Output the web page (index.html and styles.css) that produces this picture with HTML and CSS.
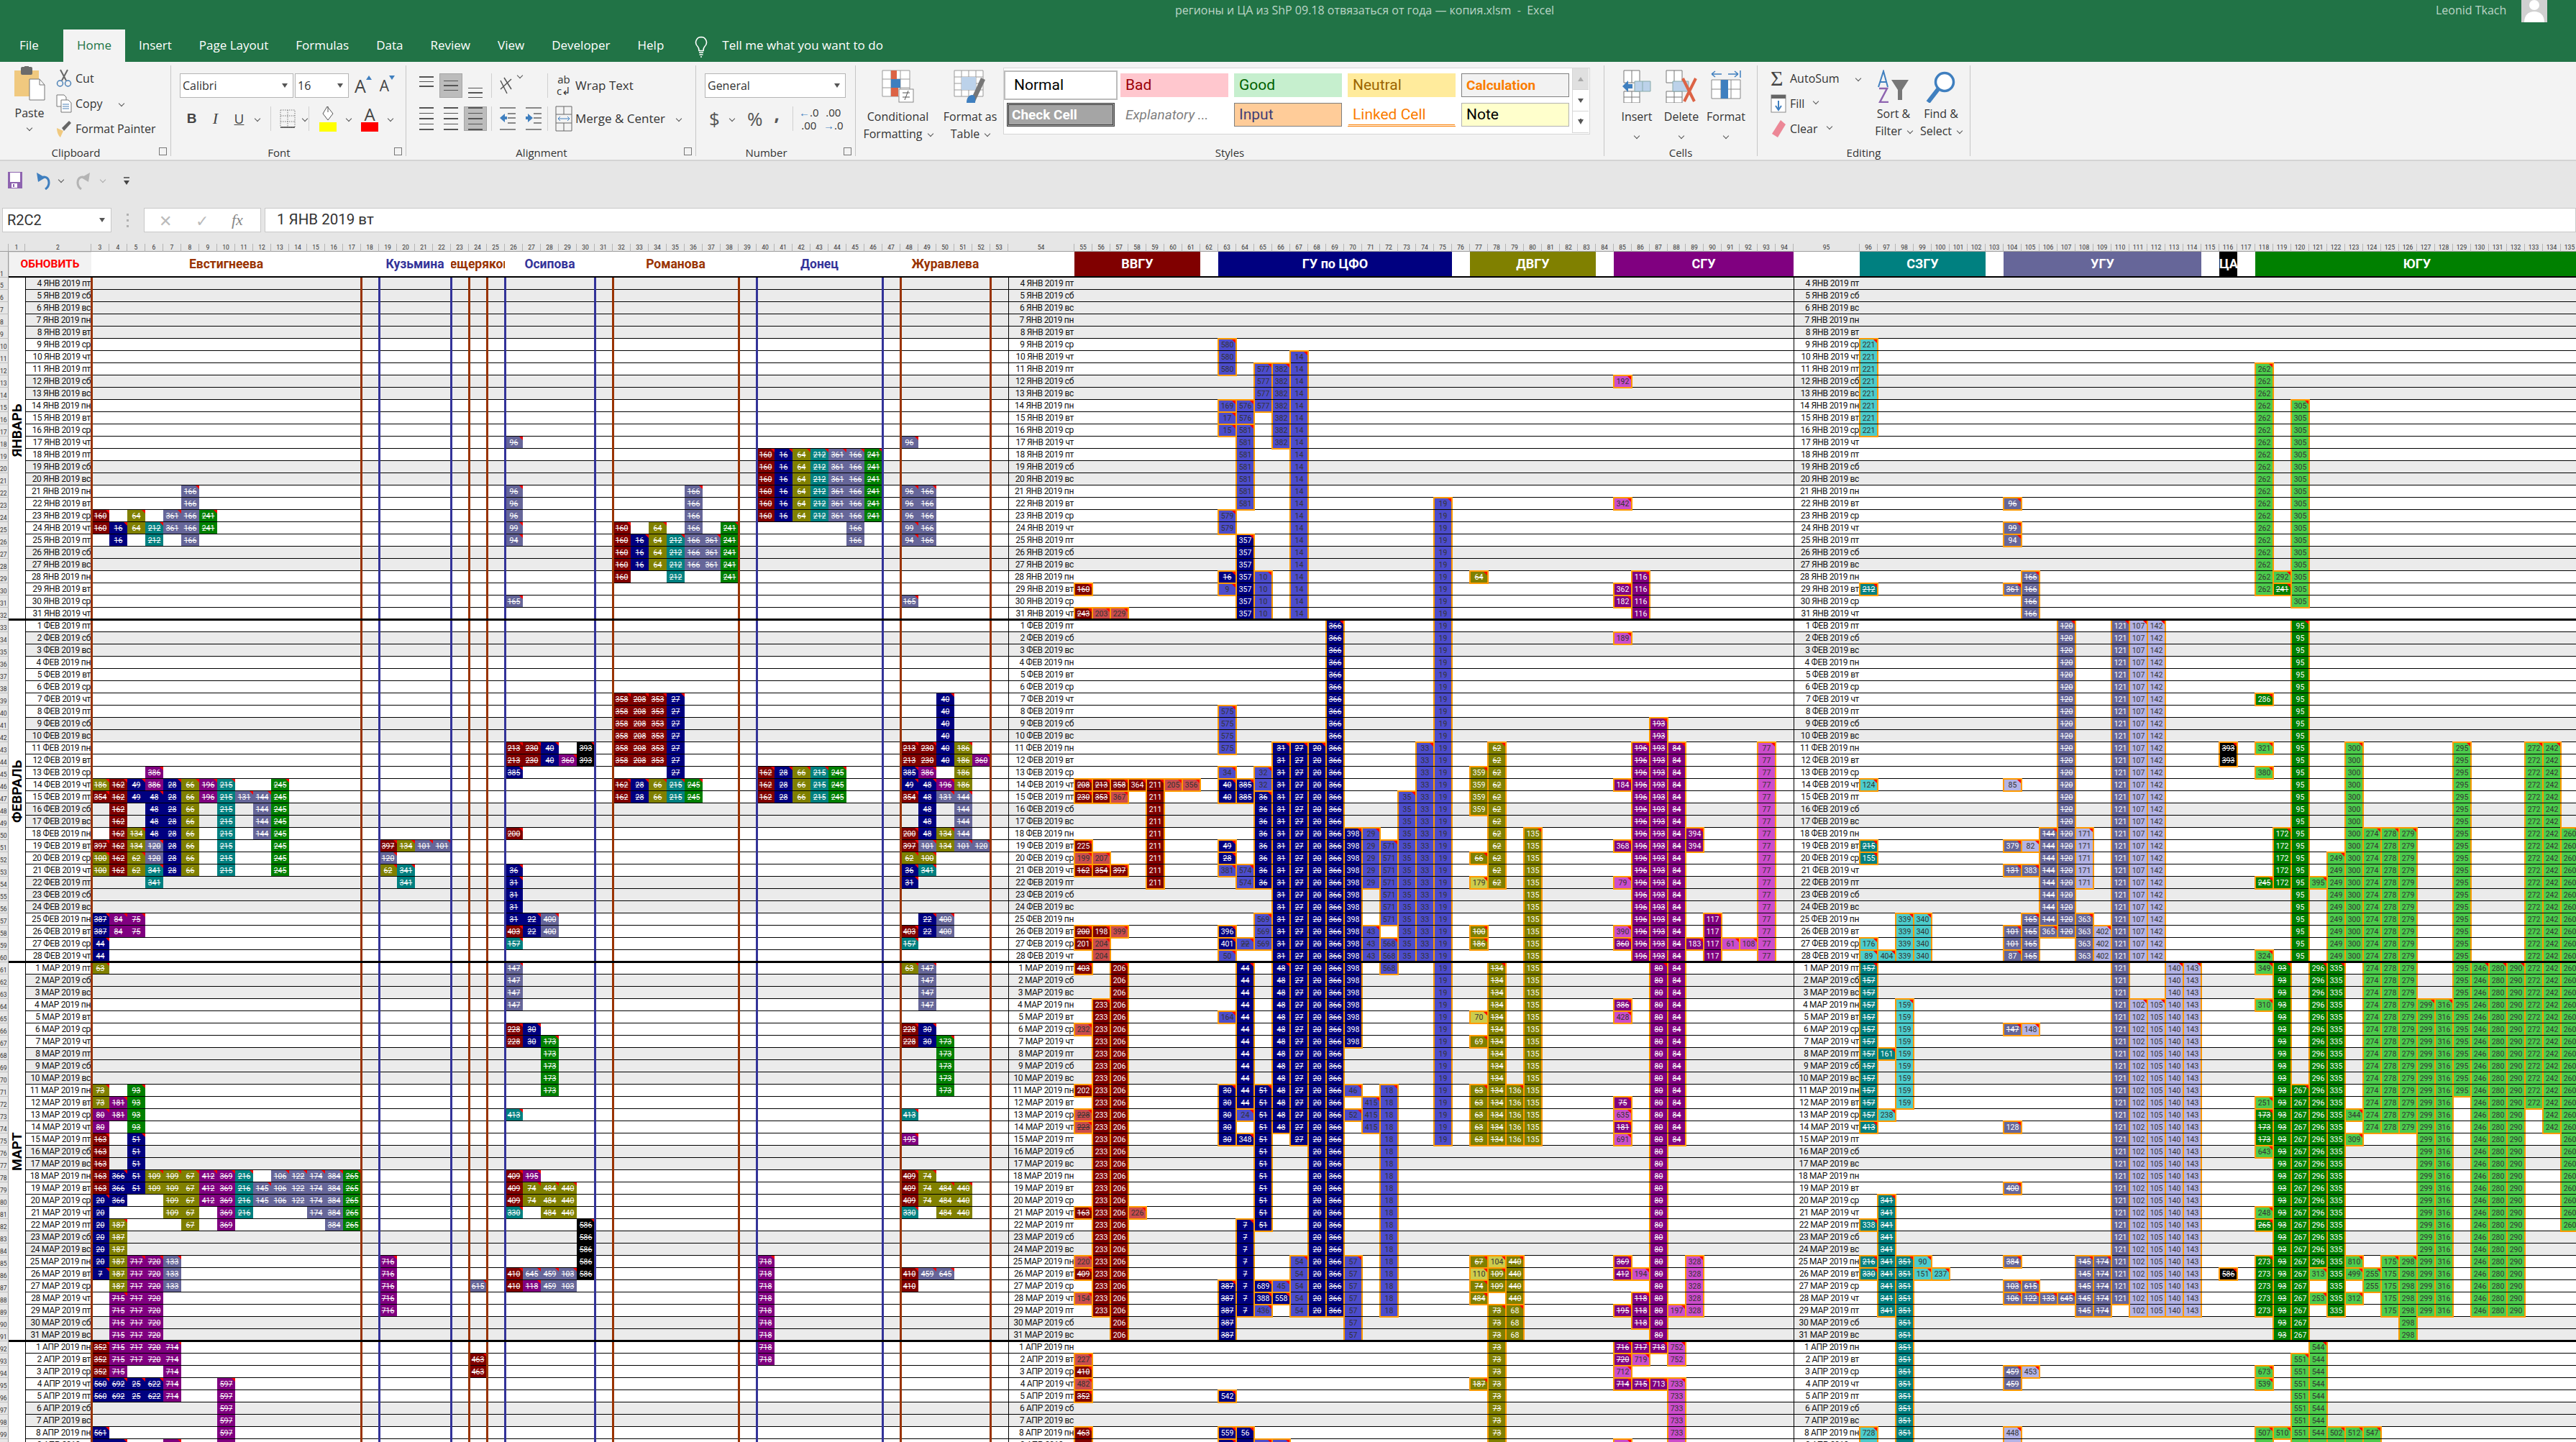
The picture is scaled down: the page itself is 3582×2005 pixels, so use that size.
FILE: index.html
```html
<!DOCTYPE html>
<html lang="ru">
<head>
    <meta charset="UTF-8">
    <title>регионы и ЦА из ShP 09.18</title>
    <link rel="stylesheet" href="styles.css">
</head>
<body>
<div class="titlebar">
    <div class="title-row">
        <span class="doc-title">регионы и ЦА из ShP 09.18 отвязаться от года — копия.xlsm &nbsp;-&nbsp; Excel</span>
        <span class="user">Leonid Tkach</span>
        <svg class="avatar" viewBox="0 0 36 31"><rect width="36" height="31" fill="#d0d0d0"/><circle cx="18" cy="7" r="7" fill="#fff"/><path d="M4 31c0-10 6-15 14-15s14 5 14 15z" fill="#fff"/></svg>
    </div>
    <div class="tabs">
        <span class="tab tab-file">File</span>
        <span class="tab tab-on">Home</span>
        <span class="tab">Insert</span>
        <span class="tab">Page Layout</span>
        <span class="tab">Formulas</span>
        <span class="tab">Data</span>
        <span class="tab">Review</span>
        <span class="tab">View</span>
        <span class="tab">Developer</span>
        <span class="tab">Help</span>
        <svg class="bulb" viewBox="0 0 18 30"><path d="M9 1.5a7.5 7.5 0 0 0-5 13c1.5 1.5 2 3 2 6h6c0-3 .5-4.500 2-6a7.500 7.500 0 0 0-5-13z" fill="none" stroke="#fff" stroke-width="1.600"/><path d="M6 23h6M6.500 26h5M8 29h2" stroke="#fff" stroke-width="1.600"/></svg>
        <span class="tell">Tell me what you want to do</span>
    </div>
</div>

<div class="ribbon">
    <div class="group g-clip">
        <div class="body">
            <div class="paste">
                <svg width="44" height="48" viewBox="0 0 44 48"><rect x="1" y="6" width="34" height="36" fill="#f0c97f"/><rect x="10" y="1" width="16" height="11" rx="2" fill="#6b6b6b"/><rect x="15" y="0" width="6" height="5" fill="#6b6b6b"/><path d="M22 18h14l7 8v21H22z" fill="#fff" stroke="#777"/><path d="M36 18v8h7" fill="none" stroke="#777"/></svg>
                <span class="paste-label">Paste</span>
                <i class="chev"></i>
            </div>
            <div class="clip-items">
                <div class="clip-row">
                    <svg width="22" height="26" viewBox="0 0 22 26"><path d="M6 1l8 15M16 1L8 16" stroke="#666" stroke-width="2"/><circle cx="5.500" cy="20" r="4" fill="none" stroke="#4a7fb5" stroke-width="1.500"/><circle cx="16.500" cy="20" r="4" fill="none" stroke="#4a7fb5" stroke-width="1.500"/></svg>
                    <span>Cut</span>
                </div>
                <div class="clip-row">
                    <svg width="22" height="26" viewBox="0 0 22 26"><path d="M1 1h10l3 3v13H1z" fill="#fff" stroke="#777"/><path d="M7 8h10l4 4v13H7z" fill="#fff" stroke="#777"/><path d="M9 14h9M9 17h9M9 20h9" stroke="#4a7fb5"/></svg>
                    <span>Copy</span><i class="chev chev-gap"></i>
                </div>
                <div class="clip-row">
                    <svg width="22" height="26" viewBox="0 0 22 26"><path d="M1 12l9 4-4 9c-3-2-5-8-5-13z" fill="#f0c97f"/><path d="M8 12l10-10 3 3-10 11z" fill="#666"/></svg>
                    <span>Format Painter</span>
                </div>
            </div>
        </div>
        <div class="label label-l">Clipboard<i class="launcher"></i></div>
    </div>

    <div class="group g-font">
        <div class="body col">
            <div class="line">
                <div class="combo combo-font">Calibri<i class="tri"></i></div>
                <div class="combo combo-size">16<i class="tri"></i></div>
                <span class="grow-a">A<i class="tri-b up"></i></span>
                <span class="shrink-a">A<i class="tri-b"></i></span>
            </div>
            <div class="line line2">
                <b class="fmt b-b">B</b><i class="fmt b-i">I</i><u class="fmt b-u">U</u><i class="chev chev-u"></i>
                <span class="vsep"></span>
                <svg class="ico-border" width="22" height="26" viewBox="0 0 22 26"><path d="M1 1h20v24H1zM11 1v24M1 9h20M1 17h20" fill="none" stroke="#777" stroke-dasharray="1.500 1.500"/><path d="M1 25h20" stroke="#444" stroke-width="1.500"/></svg>
                <i class="chev"></i>
                <span class="vsep vsep-fill"></span>
                <span class="fill-ico"><svg width="22" height="22" viewBox="0 0 22 22"><path d="M10 1l8 10-7 9-7-9z" fill="#fff" stroke="#555"/><path d="M11 1v8" stroke="#555"/></svg><em class="fill-bar yellow"></em></span>
                <i class="chev"></i>
                <span class="color-ico">A<em class="fill-bar red"></em></span>
                <i class="chev"></i>
            </div>
        </div>
        <div class="label label-l">Font<i class="launcher"></i></div>
    </div>

    <div class="group g-align">
        <div class="body col">
            <div class="line">
                <span class="al al-top"><em></em><em></em><em></em></span>
                <span class="al al-mid al-on"><em></em><em></em><em></em></span>
                <span class="al al-bot"><em></em><em></em><em></em></span>
                <span class="vsep vsep-tall"></span>
                <svg class="orient" width="22" height="34" viewBox="0 0 22 34"><path d="M3 10l9 18M8 6l10 16M3 22l15-14" stroke="#555" fill="none" stroke-width="1.500"/></svg>
                <i class="chev"></i>
                <span class="vsep vsep-tall vs-wrap"></span>
                <span class="abc">ab<br>c↲</span>
                <span class="rtext">Wrap Text</span>
            </div>
            <div class="line line2">
                <span class="al al-full"><em></em><em></em><em></em><em></em><em></em></span>
                <span class="al al-full"><em></em><em></em><em></em><em></em><em></em></span>
                <span class="al al-full al-on al-big"><em></em><em></em><em></em><em></em><em></em></span>
                <span class="vsep vsep-tall"></span>
                <svg class="indent" width="24" height="34" viewBox="0 0 24 34"><path d="M1 2h22M12 10h11M12 16h11M12 23h11M1 32h22" stroke="#666" stroke-width="1.500"/><path d="M1 16l7-6v4h3v4H8v4z" fill="#3f7fbf"/></svg>
                <svg class="indent" width="24" height="34" viewBox="0 0 24 34"><path d="M1 2h22M12 10h11M12 16h11M12 23h11M1 32h22" stroke="#666" stroke-width="1.500"/><path d="M11 16l-7-6v4H1v4h3v4z" fill="#3f7fbf"/></svg>
                <span class="vsep vsep-tall vs-merge"></span>
                <svg class="merge" width="24" height="36" viewBox="0 0 24 36"><path d="M1 1h22v34H1zM1 12h22M1 24h22M12 1v11M12 24v11" fill="none" stroke="#666"/><path d="M4 18h16M4 18l3-3M4 18l3 3M20 18l-3-3M20 18l-3 3" stroke="#3f7fbf" fill="none"/></svg>
                <span class="rtext">Merge &amp; Center</span><i class="chev chev-merge"></i>
            </div>
        </div>
        <div class="label label-l">Alignment<i class="launcher"></i></div>
    </div>

    <div class="group g-num">
        <div class="body col">
            <div class="line">
                <div class="combo combo-num">General<i class="tri"></i></div>
            </div>
            <div class="line line2">
                <span class="num-sym dollar">$</span><i class="chev"></i>
                <span class="num-sym pct">%</span>
                <span class="num-sym comma">,</span>
                <span class="vsep vsep-dec"></span>
                <span class="dec"><u>←</u>.0<br>.00</span>
                <span class="dec">.00<br><u>→</u>.0</span>
            </div>
        </div>
        <div class="label label-l">Number<i class="launcher"></i></div>
    </div>

    <div class="group g-styles">
        <div class="body">
            <div class="big big-cf">
                <svg width="46" height="46" viewBox="0 0 46 46"><path d="M1 1h38v36H1zM13 1v36M26 1v36M1 13h38M1 25h38" fill="#fff" stroke="#999"/><rect x="13" y="1" width="8" height="12" fill="#dc6345"/><rect x="13" y="13" width="13" height="12" fill="#3f7fbf"/><rect x="13" y="25" width="10" height="12" fill="#dc6345"/><rect x="24" y="27" width="20" height="18" fill="#fff" stroke="#888"/><path d="M29 32h10M29 38h10M37 29l-5 13" stroke="#555"/></svg>
                <span>Conditional</span><span>Formatting<i class="chev chev-in"></i></span>
            </div>
            <div class="big big-table">
                <svg width="46" height="46" viewBox="0 0 46 46"><path d="M1 1h40v36H1zM1 10h40M1 19h40M1 28h40M11 1v36M21 1v36M31 1v36" fill="#fff" stroke="#999"/><rect x="11" y="10" width="20" height="18" fill="#bcd2ea"/><path d="M30 44L44 14l-6-3-11 24z" fill="#777"/><path d="M18 46c0-7 3-11 8-11 3 0 5 3 4 11z" fill="#3f7fbf"/></svg>
                <span>Format as</span><span>Table<i class="chev chev-in"></i></span>
            </div>
            <div class="gallery">
                <div class="style st-normal">Normal</div>
                <div class="style st-bad">Bad</div>
                <div class="style st-good">Good</div>
                <div class="style st-neutral">Neutral</div>
                <div class="style st-calc">Calculation</div>
                <div class="style st-check">Check Cell</div>
                <div class="style st-expl">Explanatory ...</div>
                <div class="style st-input">Input</div>
                <div class="style st-linked">Linked Cell</div>
                <div class="style st-note">Note</div>
                <div class="gal-scroll">
                    <span class="gs gs-on"><i class="tri tri-up"></i></span>
                    <span class="gs"><i class="tri"></i></span>
                    <span class="gs"><i class="tri tri-more"></i></span>
                </div>
            </div>
        </div>
        <div class="label">Styles</div>
    </div>

    <div class="group g-cells">
        <div class="body">
            <div class="big big-cell">
                <svg width="42" height="46" viewBox="0 0 42 46"><path d="M3 1h22v17H3zM14 1v17M3 30h22v16H3zM14 30v16M3 38h22" fill="#fff" stroke="#777"/><path d="M18 16h22v14H18zM29 16v14" fill="#bcd2ea" stroke="#8aa"/><path d="M1 23l8-8v5h6v6H9v5z" fill="#3f7fbf"/></svg>
                <span>Insert</span><i class="chev"></i>
            </div>
            <div class="big big-cell">
                <svg width="44" height="46" viewBox="0 0 44 46"><path d="M1 1h22v17H1zM12 1v17M1 30h22v16H1zM12 30v16M1 38h22" fill="#fff" stroke="#777"/><path d="M10 16h22v14H10z" fill="#bcd2ea" stroke="#8aa"/><path d="M24 12l16 32M42 12L26 44" stroke="#dc6345" stroke-width="4"/></svg>
                <span>Delete</span><i class="chev"></i>
            </div>
            <div class="big big-cell">
                <svg width="42" height="46" viewBox="0 0 42 46"><path d="M1 14h40v26H1zM14 14v26M28 14v26M1 27h40" fill="#fff" stroke="#888"/><rect x="14" y="14" width="10" height="26" fill="#3f7fbf"/><path d="M1 6h14M1 6l5-4M1 6l5 4M24 6h14M38 6l-5-4M38 6l-5 4M41 1v10" stroke="#3f7fbf" fill="none" stroke-width="1.500"/></svg>
                <span>Format</span><i class="chev"></i>
            </div>
        </div>
        <div class="label">Cells</div>
    </div>

    <div class="group g-edit">
        <div class="body">
            <div class="edit-items">
                <div class="clip-row"><span class="sigma">Σ</span><span>AutoSum</span><i class="chev chev-gap"></i></div>
                <div class="clip-row"><svg width="22" height="26" viewBox="0 0 22 26"><rect x="1" y="1" width="20" height="24" fill="#fff" stroke="#888"/><rect x="1" y="1" width="20" height="5" fill="#666"/><path d="M11 9v12M7 16l4 6 4-6" stroke="#3f7fbf" stroke-width="2" fill="none"/></svg><span>Fill</span><i class="chev chev-in"></i></div>
                <div class="clip-row"><svg width="22" height="26" viewBox="0 0 22 26"><path d="M14 1l7 6-11 18-8-5z" fill="#ec8796"/></svg><span>Clear</span><i class="chev chev-in"></i></div>
            </div>
            <div class="big big-sort">
                <svg width="46" height="46" viewBox="0 0 46 46"><path d="M2 24L9 2l6 22M5 17h8" fill="none" stroke="#3f7fbf" stroke-width="2"/><path d="M3 26h11L4 45h12" fill="none" stroke="#8e64b0" stroke-width="2.500"/><path d="M20 14h24l-9 14v14h-6V28z" fill="#777"/></svg>
                <span>Sort &amp;</span><span>Filter<i class="chev chev-in"></i></span>
            </div>
            <div class="big big-find">
                <svg width="46" height="46" viewBox="0 0 46 46"><circle cx="28" cy="17" r="12.500" fill="#fff" stroke="#3f7fbf" stroke-width="3.500"/><path d="M19 27L5 45" stroke="#3f7fbf" stroke-width="6"/></svg>
                <span>Find &amp;</span><span>Select<i class="chev chev-in"></i></span>
            </div>
        </div>
        <div class="label">Editing</div>
    </div>
</div>

<div class="qat">
    <svg width="22" height="24" viewBox="0 0 22 24"><path d="M1 1h20v23H1z" fill="#8e64b0"/><rect x="4" y="2" width="14" height="13" fill="#fff"/><rect x="6" y="17" width="8" height="6" fill="#fff"/><rect x="8" y="18" width="2" height="4" fill="#8e64b0"/></svg>
    <svg class="q-undo" width="24" height="26" viewBox="0 0 24 26"><path d="M6 11c8-6 14-2 14 5 0 4-2 7-5 9" fill="none" stroke="#3f7fbf" stroke-width="3"/><path d="M3 2l2 13 10-6z" fill="#3f7fbf"/></svg>
    <i class="chev"></i>
    <svg class="q-redo" width="24" height="26" viewBox="0 0 24 26"><path d="M18 11C10 5 4 9 4 16c0 4 2 7 5 9" fill="none" stroke="#b4b4b4" stroke-width="3"/><path d="M21 2l-2 13-10-6z" fill="#b4b4b4"/></svg>
    <i class="chev chev-dim"></i>
    <svg class="q-more" width="10" height="14" viewBox="0 0 10 14"><path d="M1 2h8" stroke="#444" stroke-width="1.500"/><path d="M1 6h8l-4 6z" fill="#444"/></svg>
</div>

<div class="formula-bar">
    <div class="namebox">R2C2<i class="tri"></i></div>
    <div class="fb-dots"><em></em><em></em><em></em></div>
    <div class="fb-btns"><span class="x">✕</span><span class="ok">✓</span><span class="fx">fx</span></div>
    <div class="fb-input">1 ЯНВ 2019 вт</div>
</div>

<div class="sheet" id="sheet"></div>

<script src="script.js"></script>
</body>
</html>
```

FILE: styles.css
```css
* {
    box-sizing: border-box;
}

html, body {
    margin: 0;
    width: 3582px;
    height: 2005px;
    overflow: hidden;
    background: #e6e6e6;
    font-family: "Open Sans", "Liberation Sans", sans-serif;
    color: #333;
}

/* title bar + tabs */
.titlebar {
    height: 86px;
    background: #217346;
    color: #fff;
    display: flex;
    flex-direction: column;
}

.title-row {
    height: 41px;
    display: flex;
    padding-left: 1634px;
    font-size: 16px;
    line-height: 29px;
    color: #bcd5c7;
}

.doc-title {
    width: 1753px;
    white-space: nowrap;
}

.user {
    width: 119px;
    white-space: nowrap;
}

.avatar {
    width: 36px;
    height: 31px;
}

.tabs {
    height: 45px;
    display: flex;
    align-items: stretch;
    padding-left: 8px;
    font-size: 17px;
    line-height: 44px;
}

.tab {
    padding: 0 19px;
}

.tab-file {
    padding-right: 34px;
}

.tab-on {
    background: #f3f3f3;
    color: #217346;
}

.bulb {
    width: 18px;
    height: 30px;
    margin: 9px 20px 0 24px;
}

/* ribbon */
.ribbon {
    height: 138px;
    background: #f3f3f3;
    border-bottom: 2px solid #d4d4d4;
    display: flex;
    padding-top: 5px;
    font-size: 16px;
}

.group {
    display: flex;
    flex-direction: column;
    height: 126px;
    border-right: 1.500px solid #c6c6c6;
    position: relative;
}

.g-clip { width: 238px; }
.g-font { width: 327px; }
.g-align { width: 403px; }
.g-num { width: 222px; }
.g-styles { width: 1041px; }
.g-cells { width: 213px; }
.g-edit { width: 296px; border-right-width: 1px; }

.body {
    height: 108px;
    flex: none;
    display: flex;
}

.body.col {
    flex-direction: column;
    padding-left: 12px;
}

.label {
    flex: none;
    height: 18px;
    text-align: center;
    font-size: 15px;
    line-height: 26px;
    white-space: nowrap;
}

.label-l {
    padding-right: 26px;
}

.launcher {
    position: absolute;
    right: 5px;
    bottom: 1px;
    width: 11px;
    height: 11px;
    border: 1px solid #777;
    border-top-width: 1px;
}

.chev {
    display: inline-block;
    width: 6px;
    height: 6px;
    border-right: 1px solid #555;
    border-bottom: 1px solid #555;
    transform: rotate(45deg);
    flex: none;
}

.chev-dim { border-color: #aaa; }
.chev-gap { margin-left: 18px; }
.chev-in { margin-left: 8px; position: relative; top: -3px; }

.tri {
    display: inline-block;
    width: 0;
    height: 0;
    border: 4px solid transparent;
    border-top: 6px solid #555;
    border-bottom: 0;
    flex: none;
}

.paste {
    width: 74px;
    margin-left: 4px;
    display: flex;
    flex-direction: column;
    align-items: center;
    padding-top: 1px;
}

.paste-label {
    margin-top: 6px;
    line-height: 22px;
}

.paste .chev {
    margin-top: 7px;
}

.clip-items {
    display: flex;
    flex-direction: column;
    padding-top: 0;
}

.clip-row {
    height: 35px;
    display: flex;
    align-items: center;
    gap: 5px;
    white-space: nowrap;
}

/* font group */
.line {
    height: 48px;
    flex: none;
    display: flex;
    align-items: flex-start;
    padding-top: 11px;
}

.line2 {
    height: 52px;
    align-items: center;
    padding-top: 0;
}

.combo {
    height: 34px;
    background: #fff;
    border: 1.500px solid #b5b5b5;
    display: flex;
    align-items: center;
    justify-content: space-between;
    padding: 0 7px 0 3px;
    font-size: 16px;
}

.combo-font { width: 158px; }
.combo-size { width: 75px; margin-left: 2px; }
.combo-num { width: 196px; }

.grow-a, .shrink-a {
    font-size: 25px;
    line-height: 34px;
    color: #444;
    margin-left: 8px;
    display: flex;
}

.shrink-a {
    font-size: 21px;
    margin-left: 11px;
}

.tri-b {
    display: block;
    width: 0;
    height: 0;
    border: 4px solid transparent;
    border-top: 6px solid #3f7fbf;
    border-bottom: 0;
    margin-top: 3px;
}

.tri-b.up {
    border-top: 0;
    border-bottom: 6px solid #3f7fbf;
}

.fmt {
    font-size: 19px;
    width: 33px;
    text-align: center;
    color: #444;
    flex: none;
}

.b-b {
    font-family: "Liberation Sans", sans-serif;
    font-weight: bold;
}

.b-i { font-family: "Liberation Serif", serif; font-size: 22px; }

.chev-u { margin: 0 15px 0 6px; }

.vsep {
    width: 1px;
    height: 34px;
    background: #d0d0d0;
    flex: none;
}

.vsep-fill { margin-left: 2px; }

.ico-border { margin: 0 10px 0 12px; flex: none; }

.fill-ico, .color-ico {
    position: relative;
    width: 24px;
    height: 36px;
    flex: none;
    margin: 0 14px 0 14px;
    text-align: center;
    line-height: 24px;
    font-size: 24px;
    color: #444;
}

.fill-bar {
    display: block;
    position: absolute;
    left: 0;
    bottom: 0;
    width: 24px;
    height: 13px;
}

.yellow { background: #ff0; }
.red { background: #f00; }

/* alignment */
.al {
    width: 32px;
    height: 34px;
    display: flex;
    flex-direction: column;
    align-items: center;
    gap: 5px;
    flex: none;
    margin-right: 2px;
}

.al em {
    display: block;
    width: 20px;
    height: 1.500px;
    background: #555;
}

.al-top { justify-content: flex-start; padding-top: 4px; }
.al-mid { justify-content: center; }
.al-bot { justify-content: flex-end; padding-bottom: 0; }
.al-on { background: #bcbcbc; border: 1px solid #a5a5a5; }
.al-full { height: 34px; gap: 6px; justify-content: center; }
.al-big { margin-left: 0; }

.vsep-tall { margin: 0 4px 0 4px; }

.orient { margin: 0 5px; flex: none; }
.vs-wrap { margin: 0 10px 0 35px; }
.vs-merge { margin: 0 10px 0 1px; }
.indent { margin: 0 6px 0 6px; flex: none; }
.merge { flex: none; margin-right: 4px; }

.abc {
    font-size: 15px;
    line-height: 16px;
    width: 24px;
    text-align: center;
    flex: none;
    margin-right: 4px;
}

.rtext { white-space: nowrap; line-height: 34px; font-size: 17px; }
.chev-merge { margin-left: 16px; }

/* number */
.num-sym {
    font-size: 26px;
    color: #555;
    flex: none;
}

.dollar { margin: 0 14px 0 6px; }
.pct { margin: 0 16px 0 18px; }
.comma { margin-right: 18px; font-weight: bold; position: relative; top: -7px; }
.vsep-dec { margin-right: 5px; }

.dec {
    font-size: 15px;
    line-height: 18px;
    width: 34px;
    text-align: center;
    flex: none;
}

.dec u {
    color: #3f7fbf;
    text-decoration: none;
    font-weight: bold;
}

/* styles */
.big {
    display: flex;
    flex-direction: column;
    align-items: center;
    line-height: 24px;
    white-space: nowrap;
    padding-top: 6px;
}

.big svg {
    margin-bottom: 7px;
    flex: none;
}

.big-cf { width: 95px; margin-left: 11px; }
.big-table { width: 98px; margin-left: 4px; }

.gallery {
    width: 816px;
    height: 93px;
    margin: 3px 0 0 -3px;
    background: #fff;
    border: 1.500px solid #d6d6d6;
    display: grid;
    grid-template-columns: repeat(5, 150px) 22px;
    grid-template-rows: 33px 33px;
    column-gap: 8px;
    row-gap: 8px;
    padding: 7px 0 0 4px;
    font-family: Roboto, sans-serif;
    font-size: 21px;
}

.style {
    line-height: 31px;
    padding-left: 6px;
    white-space: nowrap;
    overflow: hidden;
    border: 1px solid transparent;
}

.st-normal { color: #000; box-shadow: 0 0 0 2px #fff, 0 0 0 4px #bcbcbc; padding-left: 9px; }
.st-bad { background: #ffc7ce; color: #9c0006; }
.st-good { background: #c6efce; color: #006100; }
.st-neutral { background: #ffeb9c; color: #9c6500; }
.st-calc { background: #f2f2f2; color: #fa7d00; border-color: #7f7f7f; font-weight: bold; font-size: 19px; }
.st-check { background: #a5a5a5; color: #fff; border: 3px double #3f3f3f; font-weight: bold; font-size: 19px; line-height: 27px; padding-left: 4px; }
.st-expl { color: #7f7f7f; font-style: italic; font-size: 19px; }
.st-input { background: #fc9; color: #3f3f76; border-color: #7f7f7f; }
.st-linked { color: #fa7d00; border-bottom: 3px double #fa7d00; }
.st-note { background: #ffc; color: #000; border-color: #b2b2b2; }

.gal-scroll {
    grid-column: 6;
    grid-row: 1 / 3;
    margin: -7px 0 0 -4px;
    width: 23px;
    display: flex;
    flex-direction: column;
    border-left: 1px solid #d6d6d6;
    height: 90px;
}

.gs {
    flex: 1;
    display: flex;
    align-items: center;
    justify-content: center;
    border-bottom: 1px solid #d6d6d6;
}

.gs-on { background: #e0e0e0; }
.tri-up { transform: rotate(180deg); border-top-color: #aaa; }
.tri-more { border-top-width: 7px; box-shadow: 0 -4px 0 -3px #555; }

.big-cell { width: 62px; }
.big-cell:first-child { margin-left: 14px; }
.big-cell span { line-height: 24px; }
.big-cell .chev { margin-top: 12px; }

.edit-items {
    padding-left: 18px;
    width: 156px;
}

.sigma {
    font-size: 30px;
    color: #444;
    width: 22px;
    line-height: 30px;
    font-family: "Liberation Serif", serif;
}

.big-sort { width: 66px; }
.big-find { width: 66px; }
.big-sort svg, .big-find svg { margin-bottom: 3px; }

/* quick access */
.qat {
    height: 65px;
    display: flex;
    align-items: flex-start;
    padding: 14px 0 0 10px;
}

.qat .chev { margin-top: 9px; }
.q-undo { margin: 0 10px 0 16px; }
.q-redo { margin: 0 12px 0 16px; }
.q-more { margin: 7px 0 0 25px; }

/* formula bar */
.formula-bar {
    height: 50px;
    display: flex;
    padding: 0 0 16px 3px;
    font-size: 20px;
}

.namebox, .fb-btns, .fb-input {
    height: 34px;
    background: #fff;
    border: 1.500px solid #c8c8c8;
}

.namebox {
    width: 152px;
    display: flex;
    align-items: center;
    justify-content: space-between;
    padding: 0 8px 0 6px;
    font-family: Roboto, sans-serif;
}

.fb-dots {
    width: 45px;
    display: flex;
    flex-direction: column;
    align-items: center;
    gap: 5px;
    padding-top: 8px;
}

.fb-dots em {
    display: block;
    width: 3px;
    height: 3px;
    background: #b0b0b0;
}

.fb-btns {
    width: 163px;
    display: flex;
    align-items: center;
    justify-content: space-around;
    padding: 0 8px 0 4px;
    color: #bbb;
    font-size: 22px;
}

.fb-btns .fx {
    font-family: "Liberation Serif", serif;
    font-style: italic;
    color: #888;
}

.fb-input {
    flex: 1;
    margin-left: 5px;
    padding-left: 16px;
    line-height: 31px;
    font-family: Roboto, sans-serif;
    font-size: 20.500px;
}

/* the sheet */
.sheet {
    display: grid;
    grid-template-columns: 12px 23px 92px repeat(51, 25px) 92px repeat(40, 25px) 92px repeat(40, 25px);
    grid-template-rows: 11px 36px repeat(96, 17px);
    background: #fff;
    font-family: Roboto, "Liberation Sans", sans-serif;
    font-size: 10.500px;
    height: 1667px;
    overflow: hidden;
}

.colhead {
    background: #e6e6e6;
    border-right: 1px solid #b4b4b4;
    border-bottom: 1.500px solid #9c9c9c;
    font-size: 8.500px;
    line-height: 10px;
    text-align: center;
    color: #333;
    overflow: hidden;
}

.rownum {
    background: #e6e6e6;
    border-right: 1px solid #9c9c9c;
    border-bottom: 1px solid #c0c0c0;
    font-size: 8.500px;
    line-height: 22px;
    color: #333;
    overflow: hidden;
    white-space: nowrap;
}

.rownum-top { line-height: 62px; }

.refresh {
    background: #f2f2f2;
    border-bottom: 2px solid #000;
    color: #f00;
    font-weight: bold;
    font-size: 15.500px;
    line-height: 34px;
    text-align: center;
    white-space: nowrap;
    box-shadow: inset 1px 1px 0 #d8d8d8;
}

.who {
    border-bottom: 2px solid #000;
    font-weight: bold;
    font-size: 17.500px;
    line-height: 34px;
    text-align: center;
    white-space: nowrap;
    overflow: hidden;
    display: flex;
    justify-content: center;
}

.who-brown { color: #993300; }
.who-blue { color: #333399; }

.region {
    border-bottom: 2px solid #000;
    color: #fff;
    font-weight: bold;
    font-size: 18px;
    line-height: 34px;
    text-align: center;
    white-space: nowrap;
    overflow: hidden;
}

.title-gap {
    border-bottom: 2px solid #000;
}

.band {
    border-bottom: 1px solid #000;
}

.weekend {
    background: #ebebeb;
}

.date {
    font-size: 12px;
    letter-spacing: -0.350px;
    line-height: 16px;
    text-align: right;
    padding-right: 1px;
    color: #111;
    white-space: nowrap;
    position: relative;
    z-index: 1;
}

.month {
    writing-mode: vertical-rl;
    transform: rotate(180deg);
    font-weight: bold;
    font-size: 19px;
    color: #000;
    text-align: center;
    line-height: 23px;
    background: #fff;
    position: relative;
    z-index: 3;
}

.cell {
    height: 16px;
    align-self: start;
    display: flex;
    align-items: center;
    justify-content: center;
    color: #333;
    position: relative;
    z-index: 1;
    overflow: hidden;
    white-space: nowrap;
}

/* a comment mark in the corner of the first day */
.mark::after {
    content: "";
    position: absolute;
    top: 0;
    right: 0;
    border-top: 5px solid #f00;
    border-left: 5px solid transparent;
}

.strike {
    text-decoration: line-through;
}

.edged {
    margin: 0 -1px;
    border-left: 2px solid #f90;
    border-right: 2px solid #f90;
    z-index: 2;
}

.edged.first {
    margin-top: -1px;
    height: 17px;
    border-top: 2px solid #f90;
}

.edged.last {
    height: 18px;
    border-bottom: 2px solid #f90;
}

.edged.first.last {
    height: 19px;
}

.c-R, .c-B, .c-O, .c-P, .c-T, .c-S, .c-G, .c-K { color: #fff; }
.c-R { background: #800000; }
.c-B { background: #000080; }
.c-O { background: #808000; }
.c-P { background: #800080; }
.c-T { background: #008080; }
.c-S { background: #666699; }
.c-G { background: #008000; }
.c-K { background: #000; }
.c-r { background: #cc4c4c; }
.c-b { background: #4c4ccc; }
.c-o { background: #cccc4c; }
.c-p { background: #cc4ccc; }
.c-t { background: #4ccccc; }
.c-s { background: #b3b3e6; }
.c-g { background: #4ccc4c; }

.vline {
    width: 3px;
    margin-left: -1px;
    position: relative;
    z-index: 3;
}

.v-brown { background: #993300; }
.v-blue { background: #333399; }
.v-black { width: 1px; margin-left: 0; background: #000; }

.monthline {
    height: 3px;
    margin-bottom: -1px;
    align-self: end;
    background: #000;
    position: relative;
    z-index: 4;
}
```

FILE: script.js
```js
// builds the sheet from the lists below: "offset days value colour"
// colour: capital = dark fill, small = light fill, x = struck through
var LEFT = `
5 J21-J25 166 Sx
0 J23-J24 160 Rx
2 J23-J24 64 Ox
4 J23-J24 361 Sx
6 J23-J24 241 Gx
1 J24-J25 16 Bx
3 J24-J25 212 Tx
0 F14 186 Ox
1 F14-F21 162 Rx
2 F14-F15 49 Bx
3 F13-F14 386 Px
4 F14-F21 28 Bx
5 F14-F21 66 Ox
6 F14-F15 196 Px
7 F14-F21 215 Tx
10 F14-F21 245 Gx
0 F15 354 Rx
3 F15-F18 48 Bx
8 F15 131 Sx
9 F15-F18 144 Sx
2 F18-F19 134 Ox
0 F19 397 Rx
3 F19-F20 120 Sx
0 F20-F21 100 Ox
2 F20-F21 62 Ox
3 F21-F22 341 Tx
0 F25-F26 387 Bx
1 F25-F26 84 Px
2 F25-F26 75 Px
0 F27-F28 44 Bx
0 M1 63 Ox
0 M11-M12 73 Ox
2 M11-M14 93 Gx
1 M12-M13 181 Px
0 M13-M14 80 Px
0 M15-M19 163 Rx
2 M15-M19 51 Bx
1 M18-M20 366 Bx
3 M18-M19 109 Ox
4 M18-M21 109 Ox
5 M18-M22 67 Ox
6 M18-M20 412 Px
7 M18-M22 369 Px
8 M18-M21 216 Tx
9 M19-M20 145 Sx
10 M18-M20 106 Sx
11 M18-M20 122 Sx
12 M18-M21 174 Sx
13 M18-M22 384 Sx
14 M18-M22 265 Gx
0 M20-M25 20 Bx
1 M22-M27 187 Ox
0 M26 7 Bx
2 M25-A2 717 Px
3 M25-A2 720 Px
4 M25-M27 133 Sx
1 M28-A3 715 Px
0 A1-A3 352 Rx
4 A1-A5 714 Px
0 A4-A5 560 Bx
1 A4-A5 692 Bx
2 A4-A5 25 Bx
3 A4-A5 622 Bx
7 A4-A9 597 Px
0 A8-A9 561 Bx
1 A9 541 Bx
4 A9 713 Px
16 F19 397 Rx
17 F19 134 Ox
18 F19 101 Sx
19 F19 101 Sx
16 F20 120 Sx
16 F21 62 Ox
17 F21-F22 341 Tx
16 M25-M29 716 Px
21 M27 615 Sx
21 A2-A3 463 Rx
23 J17 96 Sx
23 J21-J23 96 Sx
23 J24 99 Sx
23 J25 94 Sx
23 J30 165 Sx
23 F11-F12 213 Rx
24 F11-F12 230 Rx
25 F11-F12 40 Bx
26 F12 360 Px
27 F11-F12 393 Kx
23 F13 385 Bx
23 F18 200 Rx
23 F21 36 Bx
23 F22-F25 31 Bx
24 F25-F26 22 Bx
25 F25-F26 400 Sx
23 F26 403 Rx
23 F27 157 Tx
23 M1-M4 147 Sx
23 M6-M7 228 Rx
24 M6-M7 30 Bx
25 M7-M11 173 Gx
23 M13 413 Tx
23 M18-M20 409 Rx
24 M18 195 Px
24 M19-M20 74 Ox
25 M19-M21 484 Ox
26 M19-M21 440 Ox
23 M21 330 Tx
27 M22-M26 586 Kx
23 M26-M27 410 Rx
24 M26 645 Sx
25 M26-M27 459 Sx
26 M26-M27 103 Sx
24 M27 118 Px
29 J24-J28 160 Rx
30 J25-J27 16 Bx
31 J24-J27 64 Ox
32 J25-J28 212 Tx
33 J21-J27 166 Sx
34 J25-J27 361 Sx
35 J24-J28 241 Gx
29 F7-F12 358 Rx
30 F7-F12 208 Rx
31 F7-F12 353 Rx
32 F7-F13 27 Bx
29 F14-F15 162 Rx
30 F14-F15 28 Bx
31 F14-F15 66 Ox
32 F14-F15 215 Tx
33 F14-F15 245 Gx
37 J18-J23 160 Rx
38 J18-J23 16 Bx
39 J18-J23 64 Ox
40 J18-J23 212 Tx
41 J18-J23 361 Sx
42 J18-J25 166 Sx
43 J18-J23 241 Gx
37 F13-F15 162 Rx
38 F13-F15 28 Bx
39 F13-F15 66 Ox
40 F13-F15 215 Tx
41 F13-F15 245 Gx
37 M25-A2 718 Px
45 J17 96 Sx
45 J21-J23 96 Sx
45 J24 99 Sx
45 J25 94 Sx
46 J21-J25 166 Sx
45 J30 165 Sx
47 F7-F12 40 Bx
45 F11-F12 213 Rx
46 F11-F12 230 Rx
48 F11-F14 186 Ox
49 F12 360 Px
45 F13 385 Bx
46 F13 386 Px
45 F14 49 Bx
46 F14-F18 48 Bx
47 F14 196 Px
45 F15 354 Rx
47 F15 131 Sx
48 F15-F18 144 Sx
45 F18 200 Rx
47 F18-F19 134 Ox
45 F19 397 Rx
46 F19 101 Sx
48 F19 101 Sx
49 F19 120 Sx
45 F20 62 Ox
46 F20 100 Ox
45 F21 36 Bx
46 F21 341 Tx
45 F22 31 Bx
46 F25-F26 22 Bx
47 F25-F26 400 Sx
45 F26 403 Rx
45 F27 157 Tx
45 M1 63 Ox
46 M1-M4 147 Sx
45 M6-M7 228 Rx
46 M6-M7 30 Bx
47 M7-M11 173 Gx
45 M13 413 Tx
45 M15 195 Px
45 M18-M20 409 Rx
46 M18-M20 74 Ox
47 M19-M21 484 Ox
48 M19-M21 440 Ox
45 M21 330 Tx
45 M26-M27 410 Rx
46 M26 459 Sx
47 M26 645 Sx
`;

var MID = `
0 J29 160 Rx
0 J31 243 Rx
1 J31 203 r
2 J31 229 r
8 J9-J11 580 b
12 J10-J31 14 b
10 J11-J14 577 b
11 J11-J17 382 b
8 J14 169 b
9 J14-J15 576 b
8 J15 17 b
8 J16 15 b
9 J16-J22 581 b
8 J23-J24 579 b
9 J25-J31 357 B
8 J28 16 Bx
8 J29 9 b
10 J28-J31 10 b
20 J22-M15 19 b
22 J28 64 Ox
30 J12 192 p
30 J22 342 p
30 J29 362 P
30 J30 182 P
30 F2 189 p
31 J28-J31 116 P
14 F1-M29 366 Bx
8 F8-F11 575 b
32 F9-F28 193 Px
11 F11-F28 31 Bx
12 F11-M15 27 Bx
13 F11-M29 20 Bx
19 F11-F28 33 b
8 F13 34 b
10 F13-F14 32 b
22 F13-F16 359 O
0 F14 208 Rx
1 F14 213 Rx
2 F14 358 Rx
3 F14 364 R
4 F14-F22 211 R
5 F14 205 r
6 F14 356 r
0 F15 230 Rx
1 F15 353 Rx
2 F15 367 r
8 F14-F15 40 Bx
9 F14-F15 385 Bx
10 F15-F22 36 Bx
18 F15-F28 35 b
15 F18-M7 398 B
16 F18-F22 29 b
17 F19-F25 571 b
0 F19 225 R
0 F20 199 r
1 F20 207 r
0 F21 162 Rx
1 F21 354 Rx
2 F21 397 Rx
8 F19 49 Bx
8 F20 28 Bx
8 F21 381 b
9 F21-F22 574 b
22 F20 66 Ox
22 F22 179 o
10 F25-F27 569 b
16 F26-F28 43 b
0 F26 200 Rx
1 F26 198 R
2 F26 399 r
8 F26 396 B
8 F27 401 B
9 F27 22 bx
8 F28 50 b
0 F27 201 R
1 F27-F28 204 r
17 F27-M1 568 b
22 F26 100 Ox
22 F27 186 Ox
23 F11-F22 62 Ox
25 F18-M15 135 O
30 F14 184 P
31 F11-F28 196 Px
33 F11-M15 84 Px
34 F18-F19 394 P
30 F19 368 P
30 F22 79 p
35 F25-F28 117 P
30 F26 390 p
30 F27 360 Px
34 F27 183 P
36 F27 61 p
37 F27 108 p
38 F11-F28 77 p
0 M1 403 Rx
2 M1-M31 206 R
9 M1-M12 44 Bx
11 M1-M14 48 Bx
1 M4-M29 233 R
0 M6 232 r
0 M11 202 R
0 M13 228 rx
0 M14 223 rx
0 M21 163 Rx
3 M21 226 r
0 M25 220 r
0 M26 409 Rx
0 M28 154 r
8 M5 164 b
8 M11-M15 30 Bx
9 M13 24 b
9 M15 348 B
10 M11-M22 51 Bx
15 M11 46 b
15 M13 52 b
16 M12-M14 415 b
17 M11-M29 18 b
22 M5 70 o
22 M7 69 O
22 M11-M15 63 Ox
23 M1-M15 134 Ox
24 M11-M15 136 O
30 M4 386 Px
30 M5 428 p
30 M12 75 Px
30 M13 635 p
30 M14 181 Px
30 M15 691 p
32 M1-M31 80 Px
22 M25 67 Ox
23 M25 104 o
24 M25-M28 440 Ox
22 M26 110 o
23 M26-M27 109 Ox
22 M27 74 Ox
22 M28 484 Ox
24 M29-M31 68 O
23 M29-A9 73 Ox
30 M25 369 Px
30 M26 412 Px
31 M26 194 p
30 M29 195 Px
31 M28-M30 118 Px
33 M29 197 p
34 M25-M29 328 p
12 M25-M29 54 b
15 M25-M31 57 b
10 M27 689 B
11 M27 45 b
10 M28 388 B
11 M28 558 B
10 M29 436 b
9 M22-M29 7 Bx
8 M27-M31 387 Bx
30 A1 716 Px
31 A1 717 Px
32 A1 718 Px
33 A1-A2 752 p
30 A2 720 Px
31 A2 719 p
30 A3 712 p
30 A4 714 Px
31 A4 715 Px
32 A4 713 P
33 A4-A9 733 p
0 A2 227 r
0 A3 410 Rx
0 A4 482 r
0 A5 352 Rx
0 A8-A9 463 Rx
8 A5 542 B
8 A8 559 B
9 A8-A9 56 B
8 A9 560 B
10 A9 577 b
11 A9 558 b
22 A4 187 Ox
30 A9 721 p
`;

var RIGHT = `
0 J9-J16 221 t
22 J11-J29 262 g
24 J14-J30 305 g
23 J28 292 g
23 J29 241 Gx
0 J29 212 Tx
8 J29 361 Sx
9 J28-J31 166 Sx
8 J22 96 Sx
8 J24 99 Sx
8 J25 94 S
11 F1-F26 120 Sx
10 F18-F25 144 Sx
9 F25-F28 165 Sx
8 F26-F27 101 Sx
8 F28 87 S
10 F26 365 S
12 F18-F22 171 s
12 F25-F28 363 S
13 F26-F28 402 s
14 F1-M28 121 S
15 F1-F28 107 s
16 F1-F28 142 s
17 M1-M29 140 s
18 M1-M29 143 s
15 M4-M29 102 s
16 M4-M29 105 s
12 M25-M29 145 Sx
13 M25-M29 174 Sx
8 M28 106 Sx
9 M28 122 Sx
10 M28 133 Sx
11 M28 645 Sx
8 M27 103 Sx
9 M27 615 Sx
8 M25 384 Sx
8 M19 400 Sx
8 M14 128 S
8 M6 147 Sx
9 M6 148 s
0 F19 215 Tx
0 F20 155 T
0 F14 124 t
8 F14 85 s
8 F19 379 S
9 F19 82 s
8 F21 131 Sx
9 F21 383 S
20 F11-F12 393 Kx
20 M26 586 Kx
22 F7 286 G
22 F11 321 g
22 F13 380 g
24 F1-F28 95 G
23 F18-F22 172 G
22 F22 245 Gx
27 F11-F28 300 g
33 F11-M11 295 g
37 F11-M12 272 g
38 F11-M14 242 g
39 F18-M22 260 g
28 F18-M14 274 g
29 F18-M14 278 g
30 F18-M14 279 g
26 F20-F28 249 g
25 F22 395 g
2 F25-F28 339 t
3 F25-F28 340 t
0 F27 176 t
0 F28 89 t
1 F28 404 t
22 F28 324 g
0 M1-M13 157 Tx
0 M14 413 Tx
1 M8 161 T
2 M4-M12 159 t
1 M13 238 t
22 M1 349 g
23 M1-M31 93 Gx
25 M1-M25 296 G
26 M1-M29 335 G
25 M26 313 g
25 M28 253 g
22 M4 310 g
22 M12 251 g
22 M13-M15 173 Gx
22 M16 643 g
22 M21 248 g
22 M22 265 Gx
24 M11-M31 267 G
27 M13 344 g
27 M15 309 g
27 M25 810 g
27 M26 499 g
28 M26-M27 255 g
27 M28 312 g
29 M25-M29 175 g
30 M25-M31 298 g
31 M4-M29 299 g
32 M4-M29 316 g
34 M1-M29 246 g
35 M1-M29 280 g
36 M1-M29 290 g
22 M25-M29 273 G
1 M20-M29 341 Tx
0 M22 338 T
0 M25 216 Tx
0 M26 330 Tx
2 M25-A9 351 Tx
3 M25 90 t
3 M26 151 t
4 M26 237 t
25 A1-A9 544 g
24 A2-A9 551 g
8 A3-A4 459 Sx
9 A3 453 s
8 A8-A9 448 s
22 A3 673 g
22 A4 539 g
0 A8-A9 728 t
22 A8-A9 507 g
23 A8 510 g
26 A8-A9 502 g
27 A8-A9 512 g
28 A8-A9 547 g
`;

var sheet = document.getElementById('sheet');
var MONTHS = ['ЯНВ', 'ФЕВ', 'МАР', 'АПР'];
var DAYS = ['вс', 'пн', 'вт', 'ср', 'чт', 'пт', 'сб'];
var ROWS = 96;
// days off that do not fall on a weekend: new year holidays, 22 feb, 8 mar
var HOLIDAYS = [0, 1, 2, 3, 4, 49, 63];

function put(cls, col, row, text, colEnd, rowEnd) {
    var el = document.createElement('div');
    el.className = cls;
    el.style.gridColumn = col + (colEnd ? ' / ' + colEnd : '');
    el.style.gridRow = row + (rowEnd ? ' / ' + rowEnd : '');
    if (text !== undefined) el.textContent = text;
    sheet.appendChild(el);
    return el;
}

// excel column number -> grid column
function gc(c) {
    return c + 1;
}

function rowOf(s) {
    var d = Number(s.slice(1));
    if (s[0] == 'J') return d - 4;
    if (s[0] == 'F') return d + 27;
    if (s[0] == 'M') return d + 55;
    return d + 86;
}

// column letters across the top
var i;
put('colhead', 1, 1);
for (i = 1; i <= 135; i++) put('colhead', gc(i), 1, i);

// row 1: names and regions
put('rownum rownum-top', 1, 2, 1);
put('refresh', 2, 2, 'ОБНОВИТЬ', 4);
[
    [3, 18, 'Евстигнеева', 'who who-brown'],
    [18, 19, '', 'title-gap'],
    [19, 23, 'Кузьмина', 'who who-blue'],
    [23, 26, 'Мещерякова', 'who who-brown'],
    [26, 31, 'Осипова', 'who who-blue'],
    [31, 32, '', 'title-gap'],
    [32, 39, 'Романова', 'who who-brown'],
    [39, 40, '', 'title-gap'],
    [40, 47, 'Донец', 'who who-blue'],
    [47, 48, '', 'title-gap'],
    [48, 53, 'Журавлева', 'who who-brown'],
    [53, 55, '', 'title-gap'],
    [55, 62, 'ВВГУ', 'region c-R'],
    [62, 63, '', 'title-gap'],
    [63, 76, 'ГУ по ЦФО', 'region c-B'],
    [76, 77, '', 'title-gap'],
    [77, 84, 'ДВГУ', 'region c-O'],
    [84, 85, '', 'title-gap'],
    [85, 95, 'СГУ', 'region c-P'],
    [95, 96, '', 'title-gap'],
    [96, 103, 'СЗГУ', 'region c-T'],
    [103, 104, '', 'title-gap'],
    [104, 115, 'УГУ', 'region c-S'],
    [115, 116, '', 'title-gap'],
    [116, 117, 'ЦА', 'region c-K'],
    [117, 118, '', 'title-gap'],
    [118, 136, 'ЮГУ', 'region c-G']
].forEach(function (t) {
    put(t[3], gc(t[0]), 2, t[2], gc(t[1]));
});

// day rows
for (i = 0; i < ROWS; i++) {
    var day = new Date(2019, 0, 4 + i);
    var wd = day.getDay();
    var row = i + 3;
    var off = wd == 0 || wd == 6 || HOLIDAYS.indexOf(i) >= 0;
    var label = day.getDate() + ' ' + MONTHS[day.getMonth()] + ' 2019 ' + DAYS[wd];
    put('rownum', 1, row, i + 5);
    put('band' + (off ? ' weekend' : ''), 3, row, undefined, -1);
    put('date', gc(2), row, label);
    put('date', gc(54), row, label);
    put('date', gc(95), row, label);
}

// month names, merged over their rows
put('month', 2, 3, 'ЯНВАРЬ', undefined, 28);
put('month', 2, 31, 'ФЕВРАЛЬ', undefined, 59);
put('month', 2, 59, 'МАРТ', undefined, 90);

// day cells, one per row so the row lines stay visible
function addRuns(text, start, edged) {
    text.trim().split('\n').forEach(function (line) {
        var p = line.trim().split(' ');
        var col = start + Number(p[0]);
        var range = p[1].split('-');
        var from = rowOf(range[0]);
        var to = rowOf(range[1] || range[0]);
        for (var r = from; r <= to && r < ROWS; r++) {
            var cls = 'cell c-' + p[3][0];
            if (p[3][1] == 'x') cls += ' strike';
            if (edged) cls += ' edged';
            if (r == from) cls += ' first mark';
            if (r == to) cls += ' last';
            put(cls, gc(col), r + 3, p[2]);
        }
    });
}

addRuns(LEFT, 3, false);
addRuns(MID, 55, true);
addRuns(RIGHT, 96, true);

// the persons' separators in the left block
[
    [3, 'v-brown'], [18, 'v-brown'], [19, 'v-blue'], [23, 'v-blue'], [24, 'v-brown'],
    [25, 'v-brown'], [26, 'v-blue'], [31, 'v-blue'], [32, 'v-brown'], [39, 'v-brown'],
    [40, 'v-blue'], [47, 'v-blue'], [48, 'v-brown'], [53, 'v-brown'],
    [2, 'v-black'], [54, 'v-black'], [95, 'v-black']
].forEach(function (v) {
    put('vline ' + v[1], gc(v[0]), '3', undefined, undefined, -1);
});

// month ends
[27, 55, 86].forEach(function (r) {
    put('monthline', 2, r + 3, undefined, -1);
});
```
